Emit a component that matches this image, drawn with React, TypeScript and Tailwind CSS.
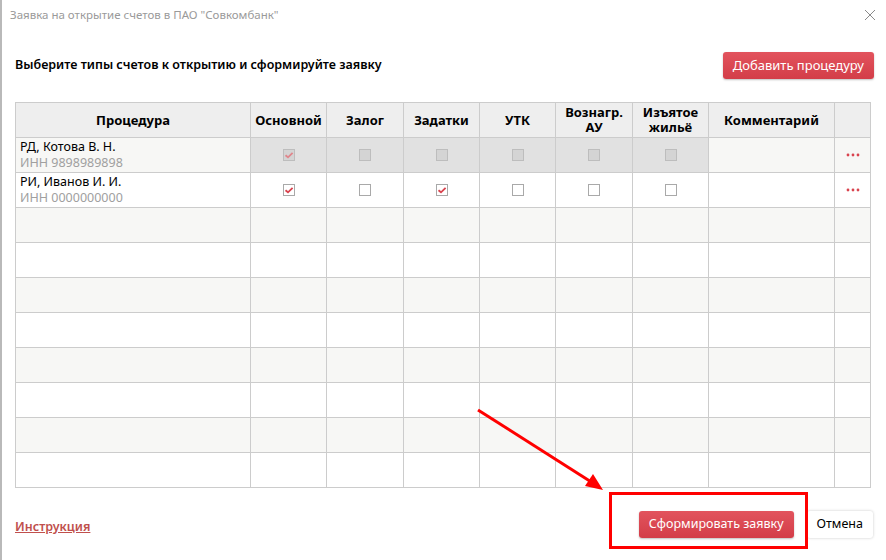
import React from 'react'

const cols = [235, 76, 77, 76, 76, 77, 76, 126, 36]

type Row = { name: string, inn: string, checks: boolean[], disabled?: boolean }

const rows: Row[] = [
  { name: 'РД, Котова В. Н.', inn: 'ИНН 9898989898', checks: [true, false, false, false, false, false], disabled: true },
  { name: 'РИ, Иванов И. И.', inn: 'ИНН 0000000000', checks: [true, false, true, false, false, false] },
]

function Check({ checked, disabled }: { checked: boolean, disabled?: boolean }) {
  return (
    <span
      className={`inline-flex h-[12px] w-[12px] items-center justify-center border align-middle ${disabled ? 'border-[#bdbdbd] bg-[#d4d4d4]' : 'border-[#a9a9a9] bg-white'}`}
    >
      {checked && (
        <svg width="10" height="10" viewBox="0 0 10 10">
          <path d="M1.5 5.2 L4 7.3 L8.6 2.8" fill="none" stroke={disabled ? '#e0868c' : '#d9434e'} strokeWidth="1.8" />
        </svg>
      )}
    </span>
  )
}

function Dots() {
  return (
    <svg width="14" height="4" viewBox="0 0 14 4" className="inline-block align-middle">
      <circle cx="2" cy="2" r="1.4" fill="#d9434e" />
      <circle cx="7" cy="2" r="1.4" fill="#d9434e" />
      <circle cx="12" cy="2" r="1.4" fill="#d9434e" />
    </svg>
  )
}

const headers = ['Процедура', 'Основной', 'Залог', 'Задатки', 'УТК', 'Вознагр.\nАУ', 'Изъятое\nжильё', 'Комментарий', '']

export default function App() {
  return (
    <div className="relative h-[560px] w-[886px] overflow-hidden border-l-2 border-[#b9b9b9] bg-white font-['Noto_Sans',sans-serif] text-[12.5px] text-black">
      <div className="flex h-[30px] items-center justify-between pl-[8px] pr-[10px]">
        <span className="text-[11.5px] text-[#9a9a9a]">Заявка на открытие счетов в ПАО "Совкомбанк"</span>
        <svg width="12" height="12" viewBox="0 0 12 12">
          <path d="M1 1 L11 11 M11 1 L1 11" stroke="#8a8a8a" strokeWidth="1" />
        </svg>
      </div>

      <div className="mt-[22px] flex items-center justify-between pl-[13px] pr-[12px]">
        <span className="font-semibold">Выберите типы счетов к открытию и сформируйте заявку</span>
        <button className="h-[27px] rounded-[3px] bg-gradient-to-b from-[#e2535d] to-[#d33d48] px-[10px] text-[13px] text-white shadow-[0_1px_2px_rgba(0,0,0,0.25)]">
          Добавить процедуру
        </button>
      </div>

      <table className="ml-[13px] mt-[23px] table-fixed border-collapse">
        <colgroup>
          {cols.map((w, i) => <col key={i} style={{ width: w }} />)}
        </colgroup>
        <thead>
          <tr className="h-[35px] bg-[#eeeeee]">
            {headers.map((h, i) => (
              <th key={i} className="whitespace-pre-line border border-[#cccccc] p-0 text-center text-[13px] font-bold leading-[15px]">
                {h}
              </th>
            ))}
          </tr>
        </thead>
        <tbody>
          {Array.from({ length: 10 }).map((_, r) => {
            const row = rows[r]
            const shade = r % 2 === 0 ? 'bg-[#f7f7f5]' : 'bg-white'
            return (
              <tr key={r} className={`h-[35px] ${shade}`}>
                <td className="border border-[#cccccc] px-[4px] py-0 text-[12.5px] leading-[16px]">
                  {row && (
                    <>
                      <div>{row.name}</div>
                      <div className="text-[#a0a0a0]">{row.inn}</div>
                    </>
                  )}
                </td>
                {Array.from({ length: 6 }).map((_, c) => (
                  <td key={c} className={`border border-[#cccccc] p-0 text-center ${row?.disabled ? 'bg-[#e1e1e1]' : ''}`}>
                    {row && <Check checked={row.checks[c]} disabled={row.disabled} />}
                  </td>
                ))}
                <td className="border border-[#cccccc] p-0" />
                <td className="border border-[#cccccc] p-0 text-center">
                  {row && <Dots />}
                </td>
              </tr>
            )
          })}
        </tbody>
      </table>

      <div className="mt-[23px] flex items-center justify-between pl-[13px] pr-[13px]">
        <a className="mt-[6px] font-semibold text-[#c0504d] underline">Инструкция</a>
        <div className="flex items-center gap-[13px]">
          <button className="h-[27px] rounded-[3px] bg-gradient-to-b from-[#e2535d] to-[#d33d48] px-[10px] text-[12.5px] text-white shadow-[0_1px_2px_rgba(0,0,0,0.25)]">
            Сформировать заявку
          </button>
          <button className="h-[27px] rounded-[3px] bg-white px-[10px] text-[12.5px] text-black shadow-[0_0_3px_rgba(0,0,0,0.22)]">
            Отмена
          </button>
        </div>
      </div>

      <div className="absolute left-[607px] top-[492px] h-[57px] w-[199px] border-[3px] border-[#ff0000]" />
      <svg className="absolute left-0 top-0" width="886" height="560">
        <line x1="476" y1="410" x2="594" y2="485" stroke="#ff0000" strokeWidth="3" />
        <path d="M601 490 L583 486 L591 474 Z" fill="#ff0000" />
      </svg>
    </div>
  )
}
